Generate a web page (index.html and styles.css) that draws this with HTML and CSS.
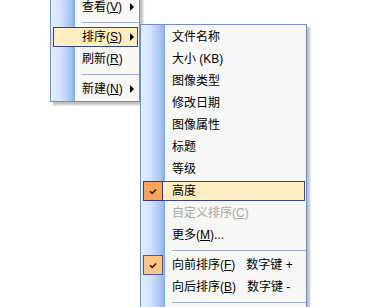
FILE: index.html
```html
<!DOCTYPE html>
<html lang="zh">
<head>
<meta charset="utf-8">
<title>排序菜单</title>
<link rel="stylesheet" href="styles.css">
</head>
<body>
<div class="menu main">
  <div class="item"><span class="icon"></span><span class="label">查看(<u>V</u>)</span><span class="arrow"></span></div>
  <div class="sep"></div>
  <div class="item hot"><span class="icon"></span><span class="label">排序(<u>S</u>)</span><span class="arrow"></span></div>
  <div class="item"><span class="icon"></span><span class="label">刷新(<u>R</u>)</span></div>
  <div class="sep"></div>
  <div class="item"><span class="icon"></span><span class="label">新建(<u>N</u>)</span><span class="arrow"></span></div>
</div>

<div class="menu sub">
  <div class="item"><span class="icon"></span><span class="label">文件名称</span></div>
  <div class="item"><span class="icon"></span><span class="label">大小 (KB)</span></div>
  <div class="item"><span class="icon"></span><span class="label">图像类型</span></div>
  <div class="item"><span class="icon"></span><span class="label">修改日期</span></div>
  <div class="item"><span class="icon"></span><span class="label">图像属性</span></div>
  <div class="item"><span class="icon"></span><span class="label">标题</span></div>
  <div class="item"><span class="icon"></span><span class="label">等级</span></div>
  <div class="item hot"><span class="icon check"><svg width="8" height="7" viewBox="0 0 8 7"><path d="M1 3.2 L3.2 5.4 L7 1.4" stroke="#1a1a1a" stroke-width="1.5" fill="none"/></svg></span><span class="label">高度</span></div>
  <div class="item disabled"><span class="icon"></span><span class="label">自定义排序(<u>C</u>)</span></div>
  <div class="item"><span class="icon"></span><span class="label">更多(<u>M</u>)...</span></div>
  <div class="sep"></div>
  <div class="item"><span class="icon check"><svg width="8" height="7" viewBox="0 0 8 7"><path d="M1 3.2 L3.2 5.4 L7 1.4" stroke="#1a1a1a" stroke-width="1.5" fill="none"/></svg></span><span class="label">向前排序(<u>F</u>)<span class="key">数字键 +</span></span></div>
  <div class="item"><span class="icon"></span><span class="label">向后排序(<u>B</u>)<span class="key">数字键 -</span></span></div>
  <div class="sep"></div>
</div>
</body>
</html>
```

FILE: styles.css
```css
html, body {
  margin: 0;
  padding: 0;
  overflow: hidden;
  background: #ffffff;
}

body {
  position: relative;
  width: 366px;
  height: 307px;
  font-family: "Liberation Sans", "Noto Sans CJK SC", sans-serif;
  font-size: 12px;
  color: #000;
}

.menu {
  position: absolute;
  display: flex;
  flex-direction: column;
  box-sizing: border-box;
  border: 1px solid #6f8fcc;
  padding: 1px 0;
  background:
    linear-gradient(to right, #e3efff 0%, #d3e3fc 40%, #a9c6f0 80%, #86abe3 100%) 0 0 / 24px 100% no-repeat,
    #f7f7f5;
  box-shadow: 3px 3px 2px rgba(0, 0, 0, 0.25);
}

.main {
  left: 50px;
  top: -6px;
  width: 90px;
  z-index: 1;
}

.sub {
  left: 140px;
  top: 24px;
  width: 167px;
  z-index: 2;
}

.item {
  display: flex;
  align-items: center;
  box-sizing: border-box;
  height: 20px;
  margin: 1px 1px 1px 2px;
  border: 1px solid transparent;
  white-space: nowrap;
}

.icon {
  flex: none;
  display: flex;
  align-items: center;
  justify-content: center;
  box-sizing: border-box;
  width: 20px;
  height: 20px;
  margin: -1px 0 -1px -1px;
}

.label {
  margin-left: 9px;
  line-height: 18px;
}

.hot {
  background: #ffeec2;
  border-color: #34468e;
}

.check {
  background: #ffc483;
  border: 1px solid #4a58b0;
}

.hot .check {
  background: #fba45a;
  border-color: #2c3c88;
}

.arrow {
  width: 0;
  height: 0;
  margin-left: auto;
  margin-right: 3px;
  border-left: 4px solid #000;
  border-top: 4px solid transparent;
  border-bottom: 4px solid transparent;
}

.sep {
  height: 1px;
  margin: 4px 0 3px 31px;
  background: #9db0d8;
}

.disabled {
  color: #a8a8a8;
}

.key {
  margin-left: 11px;
}
```
